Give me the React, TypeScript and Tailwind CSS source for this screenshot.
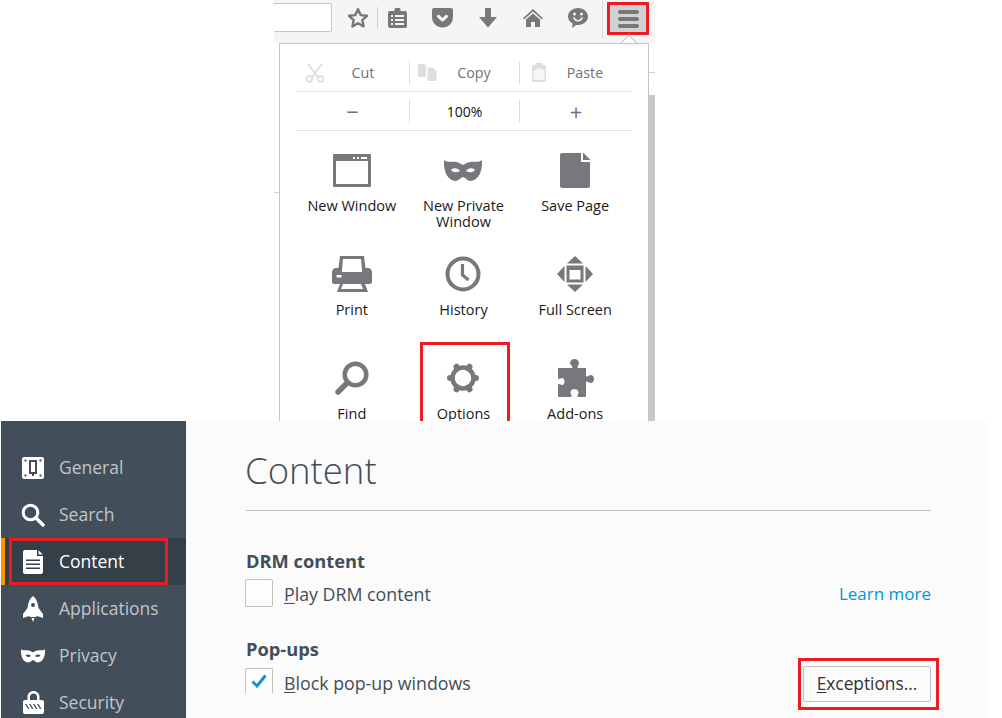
const gray = "#76787c";

const Star = () => (
  <svg width="22" height="21" viewBox="0 0 22 21" fill="none" stroke={gray} strokeWidth="2.4" strokeLinejoin="round">
    <path d="M11 2.200l2.700 5.900 6.300.7-4.700 4.300 1.300 6.300L11 16.200l-5.600 3.200 1.300-6.300L2 8.800l6.300-.7z" />
  </svg>
);

const ReadingList = () => (
  <svg width="19" height="20" viewBox="0 0 19 20" fill={gray}>
    <path fillRule="evenodd" d="M2 3h4.500V1.500C6.500.7 7.200 0 8 0h3c.8 0 1.500.7 1.500 1.500V3H17c1.100 0 2 .9 2 2v13c0 1.100-.9 2-2 2H2c-1.100 0-2-.9-2-2V5c0-1.100.9-2 2-2zM3 7v2h2V7zm4 0v2h9V7zm-4 4v2h2v-2zm4 0v2h9v-2zm-4 4v2h2v-2zm4 0v2h9v-2z" />
  </svg>
);

const Pocket = () => (
  <svg width="21" height="20" viewBox="0 0 21 20" fill={gray}>
    <path fillRule="evenodd" d="M2 0h17c1.100 0 2 .9 2 2v7c0 6-4.700 10.500-10.500 10.500S0 15 0 9V2C0 .9.900 0 2 0zm3.500 7.300c-.9.900-.5 1.700 0 2.200l3.800 3.600c.7.600 1.700.6 2.400 0l3.800-3.600c.6-.5.900-1.300 0-2.200-.8-.7-1.600-.5-2.100 0l-2.900 2.700-2.900-2.700c-.5-.5-1.300-.7-2.100 0z" />
  </svg>
);

const Download = () => (
  <svg width="18" height="20" viewBox="0 0 18 20" fill={gray}>
    <path d="M6 0h6v9h6l-9 10.500L0 9h6z" />
  </svg>
);

const Home = () => (
  <svg width="20" height="18" viewBox="0 0 20 18" fill={gray}>
    <path d="M10 0l10 9.300-1 1.200L10 2.600 1 10.500 0 9.300zM10 4.500l7 6V18h-5v-5H8v5H3v-7.500z" />
  </svg>
);

const Smiley = () => (
  <svg width="20" height="20" viewBox="0 0 20 20" fill={gray}>
    <path fillRule="evenodd" d="M10 0c5.500 0 10 3.800 10 8.500S15.500 17 10 17c-.6 0-1.200 0-1.700-.1L4 20l.6-4.400C2 14.200 0 11.500 0 8.500 0 3.800 4.500 0 10 0zM6.500 4.500a1.500 1.500 0 100 3 1.500 1.500 0 000-3zm7 0a1.500 1.500 0 100 3 1.500 1.500 0 000-3zM5 9.500c.7 2.500 2.700 4 5 4s4.300-1.500 5-4l-1.500-.4c-.5 1.700-1.900 2.900-3.500 2.900S7 10.800 6.500 9.100z" />
  </svg>
);

const Hamburger = () => (
  <svg width="21" height="18" viewBox="0 0 21 18" fill={gray}>
    <rect y="0" width="21" height="4" rx="2" />
    <rect y="7" width="21" height="4" rx="2" />
    <rect y="14" width="21" height="4" rx="2" />
  </svg>
);

const Scissors = () => (
  <svg width="20" height="20" viewBox="0 0 20 20" fill="none" stroke="#dcdee0" strokeWidth="1.800">
    <path d="M3 1l10 13M17 1L7 14" />
    <circle cx="4.500" cy="16" r="2.800" />
    <circle cx="15.500" cy="16" r="2.800" />
  </svg>
);

const CopyIcon = () => (
  <svg width="19" height="17" viewBox="0 0 19 17" fill="#dcdee0">
    <path d="M0 0h6l2 2v11H0z" />
    <path d="M9.500 3.500H15l3.500 3.500v10h-9z" />
  </svg>
);

const PasteIcon = () => (
  <svg width="14" height="19" viewBox="0 0 14 19">
    <path fill="#dcdee0" d="M4 0h6l1 2h1.500C13.300 2 14 2.700 14 3.500v14c0 .8-.7 1.500-1.500 1.500h-11C.7 19 0 18.300 0 17.500v-14C0 2.700.7 2 1.500 2H3z" />
    <path fill="#f5f6f6" d="M1.500 8l5-3 6 1.500V17h-11z" />
  </svg>
);

const WindowIcon = () => (
  <svg width="38" height="33" viewBox="0 0 38 33" fill={gray}>
    <path fillRule="evenodd" d="M1 0h36c.6 0 1 .4 1 1v31c0 .6-.4 1-1 1H1c-.6 0-1-.4-1-1V1c0-.6.4-1 1-1zm2 7v23h32V7zm17-4v2h2V3zm4 0v2h2V3zm4 0v2h6V3z" />
  </svg>
);

const MaskIcon = ({ color = gray, w = 38, h = 22 }: { color?: string; w?: number; h?: number }) => (
  <svg width={w} height={h} viewBox="0 0 38 22" fill={color}>
    <path
      fillRule="evenodd"
      d="M0 1C4 4 8 2 12 3c3 .5 5 2 7 3 2-1 4-2.500 7-3 4-1 8 1 12-2 .5 9-2 20-11 21-4 0-6-4-8-4s-4 4-8 4C2 21-.5 10 0 1zm7 10c2-2.500 7-2.500 9 1-4 2-7 1.500-9-1zm24 0c-2-2.500-7-2.500-9 1 4 2 7 1.500 9-1z"
    />
  </svg>
);

const PageIcon = () => (
  <svg width="30" height="35" viewBox="0 0 30 35" fill={gray}>
    <path d="M2 0h19v9h9v24c0 1.100-.9 2-2 2H2c-1.100 0-2-.9-2-2V2C0 .9.900 0 2 0z" />
    <path d="M23 0c.4 0 .7.100 1 .4L29.600 6c.3.300.4.600.4 1h-7z" />
  </svg>
);

const PrinterIcon = () => (
  <svg width="40" height="36" viewBox="0 0 40 36" fill={gray}>
    <path
      fillRule="evenodd"
      d="M8 0h24l1.500 12H36c2.200 0 4 1.800 4 4v10c0 1.100-.9 2-2 2h-5l3 8H5l3-8H2c-1.100 0-2-.9-2-2V16c0-2.200 1.800-4 4-4h2.500zm3 3L9.800 16h20.400L29 3zM11 28l-2 5h22l-2-5zM4.500 19v2.500h5V19z"
    />
  </svg>
);

const ClockIcon = () => (
  <svg width="36" height="36" viewBox="0 0 36 36" fill="none" stroke={gray}>
    <circle cx="18" cy="18" r="15.500" strokeWidth="4" />
    <path d="M17.500 8v11l6 5" strokeWidth="3.200" />
  </svg>
);

const FullScreenIcon = () => (
  <svg width="36" height="36" viewBox="0 0 36 36" fill={gray}>
    <path d="M18 0l8 7.500H10zM18 36l-8-7.500h16zM0 18l7.500-8v16zM36 18l-7.500 8V10z" />
    <path fillRule="evenodd" d="M9.500 9.500h17v17h-17zm3 4.500v9.500h11V14z" />
  </svg>
);

const FindIcon = () => (
  <svg width="34" height="34" viewBox="0 0 34 34" fill="none" stroke={gray}>
    <circle cx="20.500" cy="13.500" r="10.800" strokeWidth="4.500" />
    <path d="M12 22L3 31" strokeWidth="5.500" strokeLinecap="round" />
  </svg>
);

const GearIcon = () => (
  <svg width="34" height="34" viewBox="0 0 34 34" fill="none" stroke={gray}>
    <circle cx="17" cy="17" r="10.500" strokeWidth="4.500" />
    {[0, 60, 120, 180, 240, 300].map((deg) => (
      <path key={deg} d="M28 17h2" strokeWidth="6" strokeLinecap="round" transform={`rotate(${deg} 17 17)`} />
    ))}
  </svg>
);

const PuzzleIcon = () => (
  <svg width="38" height="38" viewBox="0 0 38 38" fill={gray}>
    <path d="M14 4c0-2.200 2-4 4.500-4S23 1.800 23 4c0 2-1.500 2.500-1.500 4 0 .6.400 1 1 1H30v7.500c0 .6.400 1 1 1 1.500 0 2-1.500 3.500-1.500 2 0 3.500 1.600 3.500 4s-1.500 4-3.500 4c-1.500 0-2-1.500-3.500-1.500-.6 0-1 .4-1 1V37c0 .6-.4 1-1 1h-6.500c-.7 0-1-.5-1-1 0-1.300 1-2 1-3.500 0-2-1.900-3.500-4-3.500s-4 1.500-4 3.500c0 1.500 1 2.200 1 3.500 0 .5-.3 1-1 1H3c-.6 0-1-.4-1-1V26c0-.6.400-1 1-1 1.200 0 1.500 1 3 1 1.500 0 2.500-1.500 2.500-3.500S7.500 19 6 19c-1.500 0-1.800 1-3 1-.6 0-1-.4-1-1V10c0-.6.400-1 1-1h12.500c.6 0 1-.4 1-1 0-1.500-2.500-2-2.500-4z" />
  </svg>
);

const white = "#ffffff";

const GeneralIcon = () => (
  <svg width="22" height="22" viewBox="0 0 22 22" fill={white}>
    <path fillRule="evenodd" d="M2 0h18c1.100 0 2 .9 2 2v18c0 1.100-.9 2-2 2H2c-1.100 0-2-.9-2-2V2C0 .9.900 0 2 0zm5 3v14h3v2h2v-2h3V3zm2 2h4v10H9zM2.500 17.500v2h2v-2zm15 0v2h2v-2zm-15-15v2h2v-2zm15 0v2h2v-2z" />
  </svg>
);

const SearchIcon = () => (
  <svg width="24" height="24" viewBox="0 0 24 24" fill="none" stroke={white}>
    <circle cx="9.500" cy="9.500" r="7.300" strokeWidth="3" />
    <path d="M15 15l7 7" strokeWidth="3.500" strokeLinecap="round" />
  </svg>
);

const DocIcon = () => (
  <svg width="20" height="24" viewBox="0 0 20 24" fill={white}>
    <path fillRule="evenodd" d="M2 0h12v6h6v16c0 1.100-.9 2-2 2H2c-1.100 0-2-.9-2-2V2C0 .9.900 0 2 0zm1 9.500V11h14V9.500zm0 4V15h14v-1.500zm0 4V19h14v-1.500z" />
    <path d="M15.500.3L19.700 4.500h-4.200z" />
  </svg>
);

const RocketIcon = () => (
  <svg width="20" height="26" viewBox="0 0 20 26" fill={white}>
    <path
      fillRule="evenodd"
      d="M10 0c3 2 5 7 5.500 12l4.500 6v4l-6-2-1 1H7l-1-1-6 2v-4l4.500-6C5 7 7 2 10 0zm0 7a2 2 0 100 4 2 2 0 000-4z"
    />
    <path d="M8.500 22h3L10 26z" />
  </svg>
);

const LockIcon = () => (
  <svg width="21" height="23" viewBox="0 0 21 23" fill={white}>
    <path fillRule="evenodd" d="M10.500 0C14 0 16.500 2.500 16.500 6v3H19c1.100 0 2 .9 2 2v10c0 1.100-.9 2-2 2H2c-1.100 0-2-.9-2-2V11c0-1.100.9-2 2-2h2.500V6C4.500 2.500 7 0 10.500 0zm0 2.500C8.500 2.500 7 4 7 6v3h7V6c0-2-1.500-3.500-3.500-3.500zM2 13l3 5h1.500l-3-5zm4 0l3 5h1.500l-3-5zm4 0l3 5h1.500l-3-5zm4 0l3 5h1.500l-3-5z" />
  </svg>
);

const launcher = [
  { label: ["New Window"], icon: <WindowIcon /> },
  { label: ["New Private", "Window"], icon: <MaskIcon /> },
  { label: ["Save Page"], icon: <PageIcon /> },
  { label: ["Print"], icon: <PrinterIcon /> },
  { label: ["History"], icon: <ClockIcon /> },
  { label: ["Full Screen"], icon: <FullScreenIcon /> },
  { label: ["Find"], icon: <FindIcon /> },
  { label: ["Options"], icon: <GearIcon /> },
  { label: ["Add-ons"], icon: <PuzzleIcon /> },
];

const navItems = [
  { label: "General", icon: <GeneralIcon /> },
  { label: "Search", icon: <SearchIcon /> },
  { label: "Content", icon: <DocIcon />, active: true },
  { label: "Applications", icon: <RocketIcon /> },
  { label: "Privacy", icon: <MaskIcon color={white} w={24} h={15} /> },
  { label: "Security", icon: <LockIcon /> },
];

const redBox = "pointer-events-none absolute border-[3px] border-[#ed1c24]";

const App = () => {
  return (
    <div className="flex h-[718px] w-[1002px] flex-col overflow-hidden bg-white font-['Open_Sans',sans-serif]">
      {/* browser + menu panel */}
      <section className="relative ml-[274px] h-[421px] w-[381px] shrink-0 overflow-hidden">
        <div className="relative flex h-[43px] items-start bg-[#f5f5f5] pt-[3px]">
          <div className="h-[29px] w-[58px] rounded-r-[2px] border border-l-0 border-[#c4c8cc] bg-white" />
          <div className="flex h-[29px] w-[45px] items-center justify-center pl-[7px]">
            <Star />
          </div>
          <div className="mt-[4px] h-[21px] w-px bg-[#d0d0d0]" />
          <div className="flex h-[29px] w-[42px] items-center justify-center pr-[3px]">
            <ReadingList />
          </div>
          {[<Pocket key="p" />, <Download key="d" />, <Home key="h" />, <Smiley key="s" />].map((icon) => (
            <div key={icon.key} className="flex h-[29px] w-[45px] items-center justify-center">
              {icon}
            </div>
          ))}
          <div className="ml-[2px] mt-[-3px] h-[38px] w-px bg-[#dcdcdc]" />
          <div className="ml-[7px] mt-[2px] flex h-[27px] w-[36px] items-center justify-center bg-[#d2d2d2]">
            <Hamburger />
          </div>
          <div className={`${redBox} left-[333px] top-[2px] h-[33px] w-[42px]`} />
        </div>

        {/* page behind the panel */}
        <div className="relative flex h-[378px] justify-end">
          <div className="mt-[52px] h-[326px] w-[6px] bg-[#c9c9c9]" />
          <div className="absolute left-0 top-[149px] h-px w-[5px] bg-[#cfcfcf]" />
          <div className="absolute right-0 top-[29px] h-px w-[6px] bg-[#cfcfcf]" />
        </div>

        {/* arrow */}
        <div className="absolute left-[349px] top-[37px] h-3 w-3 rotate-45 border-l border-t border-[#c4c4c4] bg-white" />

        <div className="absolute left-[5px] top-[43px] h-[400px] w-[370px] border border-x-[#c6c6c6] border-y-[#c6c6c6] bg-white px-4 pt-[17px]">
          <div className="flex h-[31px] items-start border-b border-[#e3e3e3]">
            {[
              { label: "Cut", icon: <Scissors />, w: "w-[114px]", pad: "pl-[9px]", line: true },
              { label: "Copy", icon: <CopyIcon />, w: "w-[110px]", pad: "pl-[8px]", line: true },
              { label: "Paste", icon: <PasteIcon />, w: "w-[112px]", pad: "pl-[12px]", line: false },
            ].map((b) => (
              <div
                key={b.label}
                className={`flex h-[23px] ${b.w} items-center ${b.pad} ${b.line ? "border-r border-[#dcdcdc]" : ""} text-[14.3px] text-[#6f7276]`}
              >
                {b.icon}
                <span className="flex-1 pr-[8px] text-center">{b.label}</span>
              </div>
            ))}
          </div>
          <div className="flex h-[39px] items-center border-b border-[#e3e3e3]">
            {["−", "100%", "+"].map((z, i) => (
              <div
                key={z}
                className={`flex h-[23px] items-center justify-center ${i === 0 ? "w-[114px] border-r border-[#dcdcdc] text-[22px] text-[#6f7276]" : i === 1 ? "w-[110px] border-r border-[#dcdcdc] text-[14px] text-[#111]" : "w-[112px] text-[22px] text-[#6f7276]"}`}
              >
                {z}
              </div>
            ))}
          </div>

          <div className="grid grid-cols-3 pr-px pt-[21px]">
            {launcher.map((item) => (
              <div key={item.label[0]} className="flex h-[104px] flex-col items-center text-center text-[14.5px] leading-[16px] text-[#1b1b1b]">
                <div className="flex h-[36px] items-center justify-center">{item.icon}</div>
                <div className="mt-[10px]">
                  {item.label.map((l) => (
                    <div key={l}>{l}</div>
                  ))}
                </div>
              </div>
            ))}
          </div>
        </div>

        <div className={`${redBox} left-[146px] top-[342px] h-[100px] w-[90px]`} />
      </section>

      {/* preferences */}
      <section className="flex h-[297px] w-[987px] shrink-0 bg-[#fbfbfb] pl-px">
        <nav className="relative flex h-full w-[185px] flex-col bg-[#424f5a] pt-[23px]">
          {navItems.map((item) => (
            <div
              key={item.label}
              className={`flex h-[47px] shrink-0 items-center ${item.active ? "border-l-4 border-[#ff9500] bg-[#343f48] text-white" : "pl-[4px] text-[#c1c5c8]"}`}
            >
              <div className="flex w-[54px] justify-center pl-[2px]">{item.icon}</div>
              <span className="text-[17.5px]">{item.label}</span>
            </div>
          ))}
          <div className={`${redBox} left-[8px] top-[117px] h-[47px] w-[159px]`} />
        </nav>

        <main className="relative min-w-0 flex-1 pl-[60px] pr-[56px] text-[#424e5a]">
          <h1 className="flex h-[90px] items-center border-b border-[#c1c1c1] pt-[10px] text-[36.5px] font-light">
            <span className="-ml-px">Content</span>
          </h1>

          <h2 className="mt-[38px] text-[18.3px] font-bold leading-[24px]">DRM content</h2>
          <div className="-ml-px mt-[6px] flex h-[28px] items-center">
            <div className="h-[28px] w-[28px] rounded-[2px] border border-[#c1c1c1] bg-[#fdfdfd]" />
            <span className="ml-[11px] flex-1 pt-[2px] text-[17.8px]">
              <span className="underline underline-offset-2">P</span>lay DRM content
            </span>
            <a className="pt-[2px] text-[17px] text-[#0095dd]">Learn more</a>
          </div>

          <h2 className="mt-[30px] text-[18.3px] font-bold leading-[24px]">Pop-ups</h2>
          <div className="-ml-px mt-[7px] flex h-[25px] items-start">
            <div className="flex h-[25px] w-[28px] items-center justify-center rounded-t-[2px] border border-b-0 border-[#c1c1c1] bg-[#fdfdfd]">
              <svg width="16" height="14" viewBox="0 0 16 14" fill="none" stroke="#1a8fd8" strokeWidth="3">
                <path d="M1.500 7.500l4.500 4.500L14.500 1.500" />
              </svg>
            </div>
            <span className="ml-[11px] text-[17.8px] leading-[30px]">
              <span className="underline underline-offset-2">B</span>lock pop-up windows
            </span>
          </div>

          <button
            type="button"
            className="absolute right-[56px] top-[245px] flex h-[36px] w-[128px] items-center justify-center rounded-[2px] border border-[#c1c1c1] bg-[#fbfbfb] text-[17.3px] text-[#333]"
          >
            <span>
              <span className="underline underline-offset-2">E</span>xceptions...
            </span>
          </button>
          <div className={`${redBox} right-[48px] top-[237px] h-[52px] w-[141px]`} />
        </main>
      </section>
    </div>
  );
};

export default App;
